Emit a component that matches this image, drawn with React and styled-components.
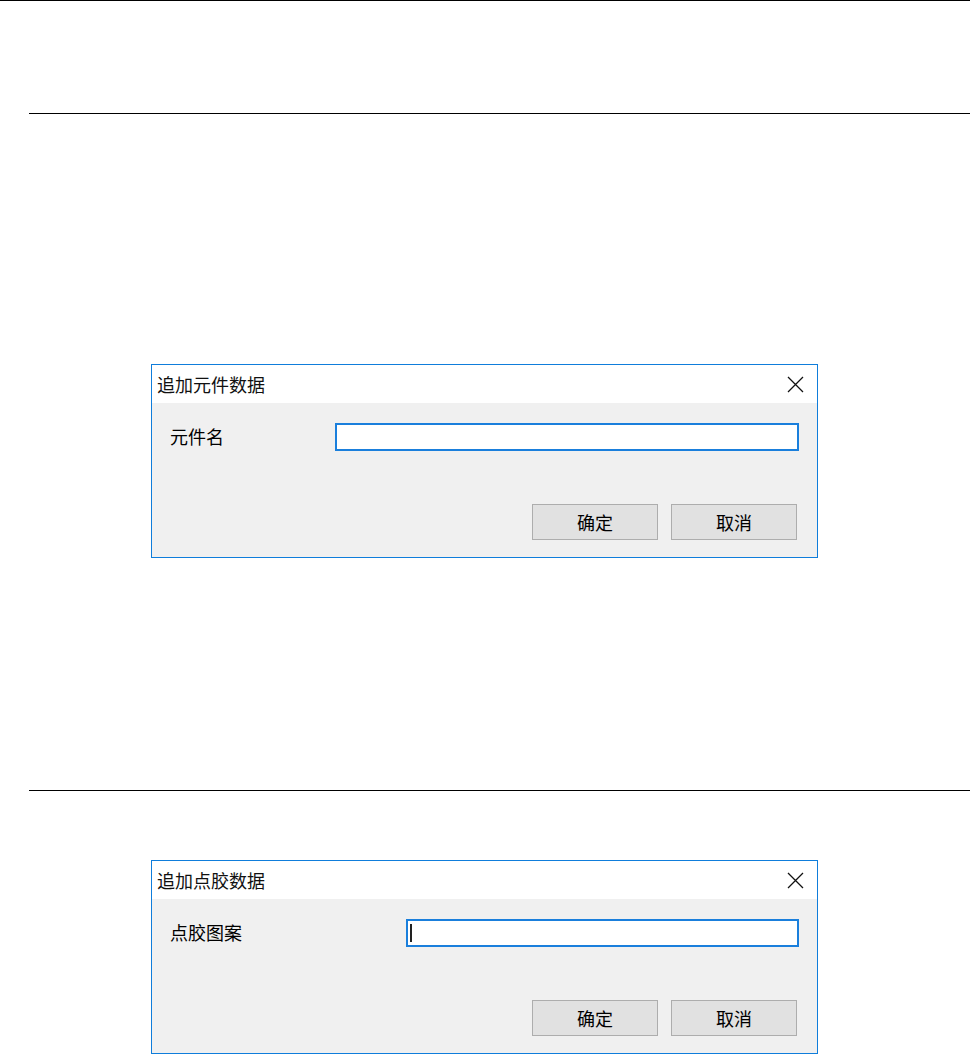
import React from 'react';
import styled, { createGlobalStyle } from 'styled-components';

const GlobalStyle = createGlobalStyle`
  html, body {
    margin: 0;
    padding: 0;
    background: #ffffff;
  }
  body {
    font-family: "Noto Sans CJK SC", "Noto Sans", sans-serif;
    color: #000;
  }
`;

const Page = styled.div`
  width: 970px;
  min-height: 1055px;
  display: flex;
  flex-direction: column;
  border-top: 1px solid #000;
  box-sizing: border-box;
`;

const Rule = styled.div`
  height: 1px;
  background: #000;
  margin-left: 29px;
  margin-top: ${p => p.$top}px;
`;

const Dialog = styled.div`
  width: 667px;
  margin-left: 151px;
  margin-top: ${p => p.$top}px;
  border: 1px solid #0f7ddb;
  box-sizing: border-box;
  display: flex;
  flex-direction: column;
`;

const TitleBar = styled.div`
  height: 38px;
  background: #ffffff;
  display: flex;
  align-items: center;
  justify-content: space-between;
  padding: 0 13px 0 5px;
`;

const Title = styled.span`
  font-size: 18px;
  line-height: 1;
  color: #111;
`;

const CloseButton = styled.div`
  width: 18px;
  height: 18px;
  display: flex;
  align-items: center;
  justify-content: center;
`;

const Body = styled.div`
  height: 154px;
  box-sizing: border-box;
  background: #f0f0f0;
  padding: 20px 18px 17px 18px;
  display: flex;
  flex-direction: column;
`;

const FieldRow = styled.div`
  display: flex;
  align-items: center;
`;

const Label = styled.span`
  width: ${p => p.$width}px;
  flex-shrink: 0;
  font-size: 18px;
  line-height: 1;
  padding-bottom: 2px;
`;

const FieldBox = styled.div`
  flex: 1;
  height: 28px;
  box-sizing: border-box;
  border: 2px solid #1a7fdc;
  background: #ffffff;
  display: flex;
  align-items: center;
  padding-left: 2px;
`;

const Caret = styled.span`
  width: 1.5px;
  height: 18px;
  background: #222;
`;

const ButtonRow = styled.div`
  margin-top: auto;
  margin-right: 2px;
  display: flex;
  justify-content: flex-end;
  gap: 13px;
`;

const Button = styled.div`
  width: 126px;
  height: 36px;
  box-sizing: border-box;
  border: 1px solid #adadad;
  background: #e1e1e1;
  display: flex;
  align-items: center;
  justify-content: center;
  font-size: 18px;
  line-height: 1;
`;

const CloseIcon = () => (
  <svg width="17" height="17" viewBox="0 0 17 17">
    <path d="M1 1 L16 16 M16 1 L1 16" stroke="#111" strokeWidth="1.3" fill="none" />
  </svg>
);

const AddDialog = ({ title, label, labelWidth, focused, top }) => (
  <Dialog $top={top}>
    <TitleBar>
      <Title>{title}</Title>
      <CloseButton>
        <CloseIcon />
      </CloseButton>
    </TitleBar>
    <Body>
      <FieldRow>
        <Label $width={labelWidth}>{label}</Label>
        <FieldBox>{focused && <Caret />}</FieldBox>
      </FieldRow>
      <ButtonRow>
        <Button>确定</Button>
        <Button>取消</Button>
      </ButtonRow>
    </Body>
  </Dialog>
);

export default function App() {
  return (
    <>
      <GlobalStyle />
      <Page>
        <Rule $top={112} />
        <AddDialog top={250} title="追加元件数据" label="元件名" labelWidth={165} />
        <Rule $top={232} />
        <AddDialog top={69} title="追加点胶数据" label="点胶图案" labelWidth={236} focused />
      </Page>
    </>
  );
}
